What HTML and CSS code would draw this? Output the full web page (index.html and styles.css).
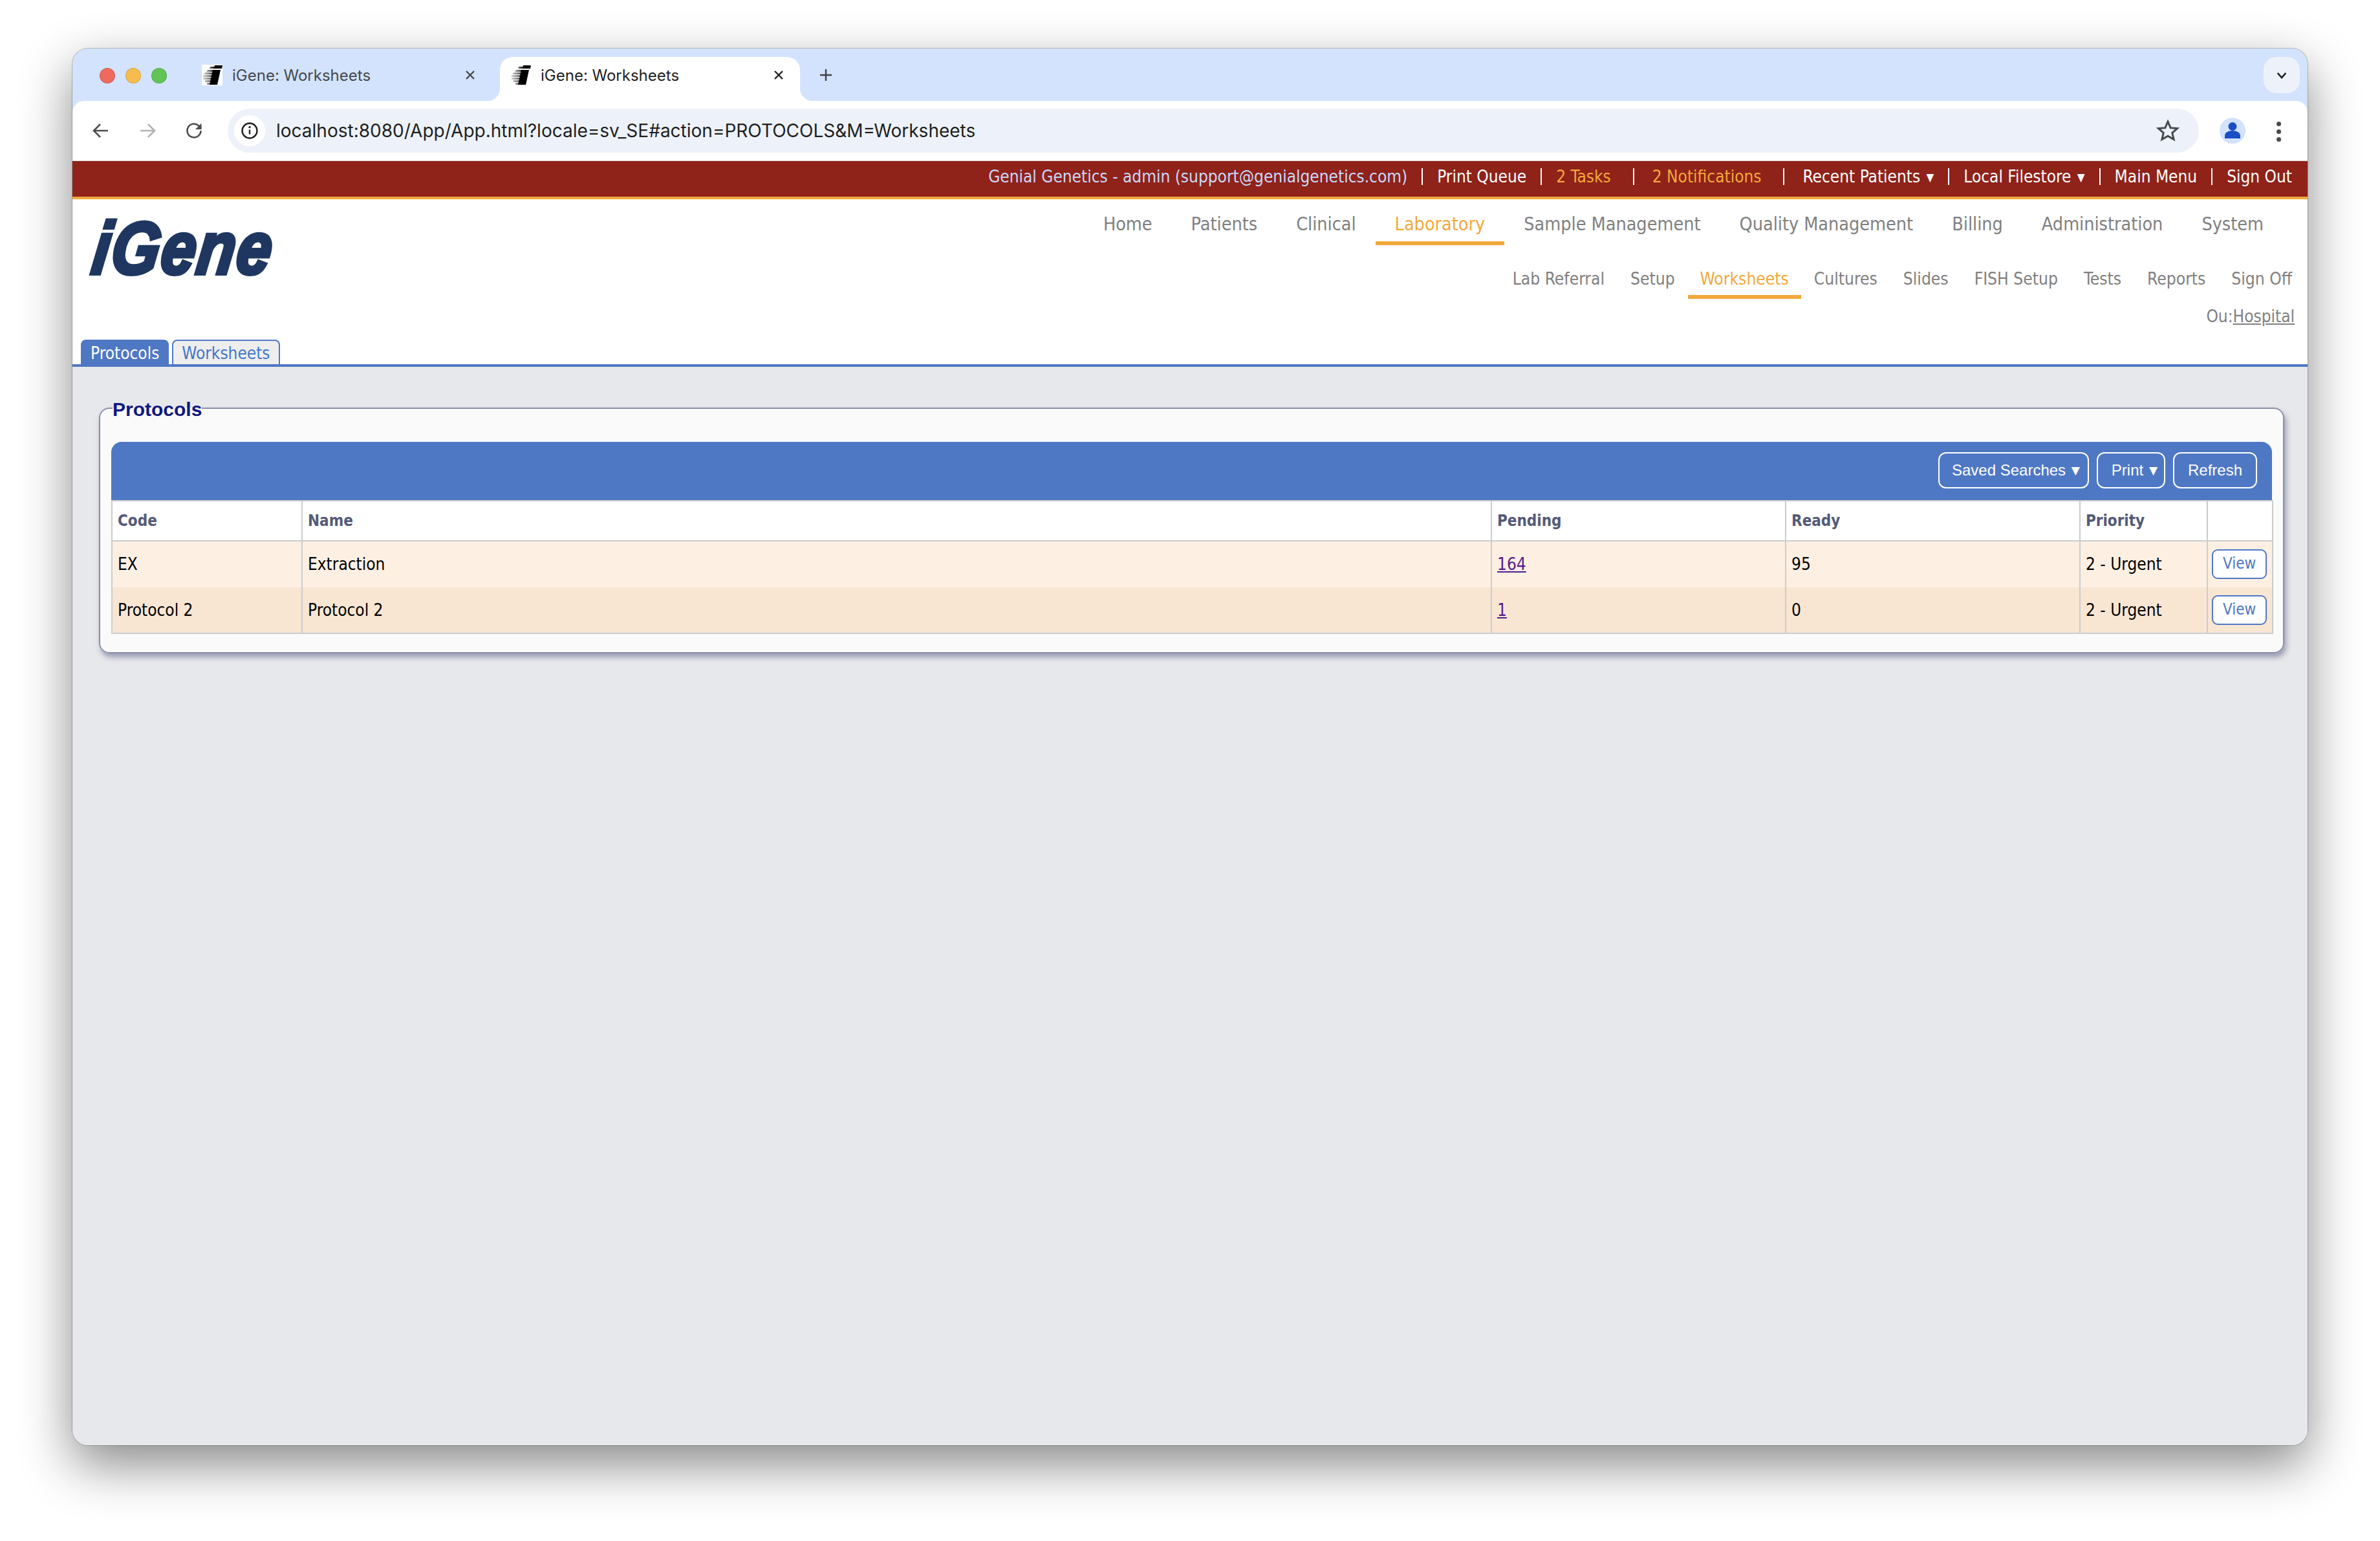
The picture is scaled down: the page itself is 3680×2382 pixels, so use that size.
FILE: index.html
```html
<!DOCTYPE html>
<html lang="en">
<head>
<meta charset="utf-8">
<title>iGene: Worksheets</title>
<link rel="stylesheet" href="styles.css">
</head>
<body>
<svg class="defs" width="0" height="0" aria-hidden="true">
  <defs>
    <linearGradient id="fade" x1="0" x2="1" y1="0" y2="0">
      <stop offset="0" stop-color="#000" stop-opacity=".12"/>
      <stop offset=".6" stop-color="#000" stop-opacity=".55"/>
      <stop offset="1" stop-color="#000"/>
    </linearGradient>
    <symbol id="favicon" viewBox="0 0 32 32">
      <rect width="32" height="32" fill="#fff"/>
      <path d="M20 1h12l-1 5H19zM17 8h12l-5 23H12z" fill="#000"/>
      <path d="M13 3h8l-1 3H12zM9 8h10l-1 3H7zM5 12h14l-1 3H3zM2 16h16l-1 3H1zM2 20h14l-1 3H2zM5 24h10l-1 3H5zM8 28h6l-1 3H8z" fill="url(#fade)"/>
    </symbol>
  </defs>
</svg>
<div class="window">
  <div class="tabstrip">
    <div class="lights">
      <span class="light light-red"></span>
      <span class="light light-amber"></span>
      <span class="light light-green"></span>
    </div>
    <div class="btab">
      <svg class="favicon"><use href="#favicon"/></svg>
      <span class="btab-title">iGene: Worksheets</span>
      <svg class="btab-x" viewBox="0 0 18 18"><path d="M3 3l12 12M15 3L3 15"/></svg>
    </div>
    <div class="btab btab-active">
      <svg class="favicon"><use href="#favicon"/></svg>
      <span class="btab-title">iGene: Worksheets</span>
      <svg class="btab-x" viewBox="0 0 18 18"><path d="M3 3l12 12M15 3L3 15"/></svg>
    </div>
    <svg class="newtab" viewBox="0 0 24 24"><path d="M12 3v18M3 12h18"/></svg>
    <div class="tabsearch"><svg viewBox="0 0 20 12"><path d="M3 2l7 8 7-8"/></svg></div>
  </div>
  <div class="toolbar">
    <div class="tool"><svg viewBox="0 0 28 28" class="ico"><path d="M25 14H4M13 4L3 14l10 10"/></svg></div>
    <div class="tool"><svg viewBox="0 0 28 28" class="ico ico-off"><path d="M3 14h21M15 4l10 10-10 10"/></svg></div>
    <div class="tool"><svg viewBox="0 0 28 28" class="ico"><path d="M24.5 14a10.5 10.5 0 1 1-3.2-7.6L25 10"/><path class="solid" d="M25.5 2.5v9.5h-9.5z"/></svg></div>
    <div class="omnibox">
      <span class="site-info"><svg viewBox="0 0 28 28"><circle cx="14" cy="14" r="11.5"/><path d="M14 12.5v7"/><circle class="solid" cx="14" cy="8.6" r="1.7"/></svg></span>
      <span class="url">localhost:8080/App/App.html?locale=sv_SE#action=PROTOCOLS&amp;M=Worksheets</span>
      <svg class="star" viewBox="0 0 32 32"><path d="M16 3.5l3.7 8.6 9.3.8-7 6.1 2.1 9.1-8.1-4.8-8.1 4.8 2.1-9.1-7-6.1 9.3-.8z"/></svg>
    </div>
    <div class="avatar"><svg viewBox="0 0 40 40"><circle cx="20" cy="13.5" r="6.5"/><path d="M8 32v-4c0-5 5-8 12-8s12 3 12 8v4z"/></svg></div>
    <div class="kebab"><i></i><i></i><i></i></div>
  </div>
  <div class="app">
    <div class="topbar">
      <span class="tb-user">Genial Genetics - admin (support@genialgenetics.com)</span>
      <span class="tb-sep"></span>
      <span>Print Queue</span>
      <span class="tb-sep"></span>
      <span class="tb-alert">2 Tasks</span>
      <span class="tb-sep tb-sep-wide"></span>
      <span class="tb-alert">2 Notifications</span>
      <span class="tb-sep tb-sep-wide"></span>
      <span>Recent Patients <span class="caret">▼</span></span>
      <span class="tb-sep"></span>
      <span>Local Filestore <span class="caret">▼</span></span>
      <span class="tb-sep"></span>
      <span>Main Menu</span>
      <span class="tb-sep"></span>
      <span>Sign Out</span>
    </div>
    <div class="header">
      <div class="header-top">
        <div class="logo">iGene</div>
        <div class="navs">
          <nav class="mainnav">
            <a>Home</a><a>Patients</a><a>Clinical</a><a class="on">Laboratory</a><a>Sample Management</a><a>Quality Management</a><a>Billing</a><a>Administration</a><a>System</a>
          </nav>
          <nav class="subnav">
            <a>Lab Referral</a><a>Setup</a><a class="on">Worksheets</a><a>Cultures</a><a>Slides</a><a>FISH Setup</a><a>Tests</a><a>Reports</a><a>Sign Off</a>
          </nav>
          <div class="ou">Ou:<u>Hospital</u></div>
        </div>
      </div>
      <div class="pagetabs">
        <span class="pagetab pagetab-on">Protocols</span>
        <span class="pagetab">Worksheets</span>
      </div>
    </div>
    <div class="content">
      <fieldset class="panel">
        <legend class="panel-title">Protocols</legend>
        <div class="panel-bar">
          <span class="barbtn barbtn-saved">Saved Searches <span class="caret">▼</span></span>
          <span class="barbtn barbtn-print">Print <span class="caret">▼</span></span>
          <span class="barbtn barbtn-refresh">Refresh</span>
        </div>
        <table class="grid">
          <colgroup>
            <col class="c1"><col class="c2"><col class="c3"><col class="c4"><col class="c5"><col class="c6">
          </colgroup>
          <thead>
            <tr><th>Code</th><th>Name</th><th>Pending</th><th>Ready</th><th>Priority</th><th></th></tr>
          </thead>
          <tbody>
            <tr class="odd"><td>EX</td><td>Extraction</td><td><a class="count">164</a></td><td>95</td><td>2 - Urgent</td><td class="act"><span class="viewbtn">View</span></td></tr>
            <tr class="even"><td>Protocol 2</td><td>Protocol 2</td><td><a class="count">1</a></td><td>0</td><td>2 - Urgent</td><td class="act"><span class="viewbtn">View</span></td></tr>
          </tbody>
        </table>
      </fieldset>
    </div>
  </div>
</div>
</body>
</html>
```
FILE: styles.css
```css
* { box-sizing: border-box; }
html, body { margin: 0; height: 100%; }
body {
  background: #fff;
  padding: 75px 112px 148px;
  overflow: hidden;
  font-family: "DejaVu Sans Condensed", "DejaVu Sans", sans-serif;
  font-stretch: condensed;
}
.defs { position: absolute; }
.window {
  height: 2159px;
  display: flex;
  flex-direction: column;
  background: #d3e3fd;
  border-radius: 24px;
  overflow: hidden;
  box-shadow: 0 0 0 1px rgba(0,0,0,.22);
}
body::before {
  content: "";
  position: absolute;
  left: 112px; top: 75px;
  width: 3456px; height: 2159px;
  border-radius: 24px;
  box-shadow: 0 30px 80px rgba(0,0,0,.47);
}
.window { position: relative; }

/* browser chrome */
.tabstrip {
  height: 81px;
  flex: none;
  display: flex;
  align-items: flex-start;
  padding: 13px 12px 0 42px;
}
.lights { display: flex; gap: 16px; margin-top: 17px; margin-right: 38px; }
.light { width: 24px; height: 24px; border-radius: 50%; border: 1px solid rgba(0,0,0,.12); }
.light-red { background: #ee6a5f; }
.light-amber { background: #f5bd4f; }
.light-green { background: #61c454; }
.btab {
  width: 464px;
  height: 68px;
  display: flex;
  align-items: center;
  padding: 0 24px 12px 16px;
  margin-right: 13px;
  position: relative;
  border-radius: 20px 20px 0 0;
}
.btab-active { background: #fff; margin-right: 0; }
.btab-active::before, .btab-active::after {
  content: "";
  position: absolute;
  bottom: 0;
  width: 20px;
  height: 20px;
}
.btab-active::before { left: -20px; background: radial-gradient(circle at 0 0, transparent 20px, #fff 20.5px); }
.btab-active::after { right: -20px; background: radial-gradient(circle at 100% 0, transparent 20px, #fff 20.5px); }
.favicon { width: 32px; height: 32px; flex: none; }
.btab-active .favicon { border-radius: 2px; }
.btab-title {
  flex: 1;
  margin-left: 15px;
  font-family: Inter, sans-serif;
  font-stretch: normal;
  font-size: 24px;
  color: #45484d;
  white-space: nowrap;
}
.btab-active .btab-title { color: #1f1f1f; }
.btab-x { width: 18px; height: 18px; fill: none; stroke: #45484d; stroke-width: 2.4; flex: none; margin-top: 0; }
.btab-active .btab-x { stroke: #1f1f1f; }
.newtab { width: 24px; height: 24px; margin: 16px 0 0 28px; fill: none; stroke: #3d4043; stroke-width: 2.4; flex: none; }
.tabsearch {
  margin-left: auto;
  width: 56px;
  height: 56px;
  background: #edf2fa;
  border-radius: 20px;
  display: flex;
  align-items: center;
  justify-content: center;
}
.tabsearch svg { width: 18px; height: 11px; fill: none; stroke: #1f1f1f; stroke-width: 2.8; }
.toolbar {
  height: 93px;
  flex: none;
  background: #fff;
  border-radius: 18px 18px 0 0;
  border-bottom: 1px solid #dcdcdc;
  display: flex;
  align-items: flex-start;
  padding: 12px 40px 0 8px;
}
.tool { width: 72px; height: 68px; display: flex; align-items: center; justify-content: center; }
.ico { width: 28px; height: 28px; fill: none; stroke: #4a4d50; stroke-width: 2.6; }
.ico-off { stroke: #b0b2b4; }
.ico .solid { fill: #4a4d50; stroke: none; }
.omnibox {
  flex: 1;
  height: 68px;
  margin-left: 16px;
  background: #edf2fa;
  border-radius: 34px;
  display: flex;
  align-items: center;
  padding: 0 30px 0 10px;
}
.site-info {
  width: 48px;
  height: 48px;
  border-radius: 50%;
  background: #fff;
  display: flex;
  align-items: center;
  justify-content: center;
  flex: none;
}
.site-info svg { width: 28px; height: 28px; fill: none; stroke: #1f1f1f; stroke-width: 2.4; }
.site-info .solid { fill: #1f1f1f; stroke: none; }
.url {
  margin-left: 17px;
  font-family: Inter, sans-serif;
  font-stretch: normal;
  font-size: 28px;
  color: #1f1f1f;
  white-space: nowrap;
}
.star { width: 36px; height: 36px; margin-left: auto; fill: none; stroke: #45484d; stroke-width: 2.6; }
.avatar {
  width: 40px;
  height: 40px;
  margin: 14px 0 0 32px;
  border-radius: 50%;
  background: #d3e3fd;
  flex: none;
}
.avatar svg { width: 40px; height: 40px; fill: #1a4fc4; display: block; }
.kebab {
  width: 8px;
  margin: 20px 0 0 48px;
  display: flex;
  flex-direction: column;
  gap: 5px;
  flex: none;
}
.kebab i { width: 7px; height: 7px; border-radius: 50%; background: #45484d; }

/* app */
.app { flex: 1; display: flex; flex-direction: column; background: #e7e8ec; min-height: 0; }
.topbar {
  height: 59px;
  flex: none;
  background: #8f2219;
  border-bottom: 4px solid #f2a93b;
  display: flex;
  justify-content: flex-end;
  align-items: center;
  padding: 0 24px 8px 0;
  font-size: 26px;
  color: #fff;
  white-space: nowrap;
}
.tb-user { color: #c9d9f8; }
.tb-alert { color: #f2a93b; }
.tb-sep { width: 2px; height: 26px; background: #fff; margin: 0 22px; flex: none; }
.tb-sep-wide { margin: 0 28px 0 34px; }
.caret { font-size: 17px; vertical-align: 2px; margin-left: 2px; }
.header { height: 255px; flex: none; background: #fff; display: flex; flex-direction: column; }
.header-top { height: 217px; display: flex; justify-content: space-between; }
.logo {
  margin: 0 0 0 32px;
  width: 300px;
  height: 160px;
  font-family: "Liberation Sans", sans-serif;
  font-stretch: normal;
  font-weight: 700;
  font-style: italic;
  font-size: 114px;
  line-height: 152px;
  color: #1f3760;
  -webkit-text-stroke: 6px #1f3760;
  letter-spacing: 3px;
  transform: scaleX(.84) skewX(-9deg);
  transform-origin: 0 50%;
}
.navs { display: flex; flex-direction: column; align-items: flex-end; }
.mainnav { display: flex; margin-right: 38px; height: 71px; }
.mainnav a {
  padding: 0 30px;
  height: 71px;
  line-height: 78px;
  font-size: 28.5px;
  color: #808080;
  white-space: nowrap;
}
.mainnav a.on, .subnav a.on { color: #f2a93b; border-bottom: 6px solid #f2a93b; }
.subnav { display: flex; margin-right: 4px; margin-top: 18px; height: 65px; }
.subnav a {
  padding: 0 20px;
  height: 65px;
  line-height: 69px;
  font-size: 26.2px;
  color: #808080;
  white-space: nowrap;
}
.subnav a.on { padding: 0 19px; }
.ou { margin-right: 20px; margin-top: 10px; font-size: 26px; color: #808080; line-height: 34px; }
.pagetabs { display: flex; gap: 5px; height: 38px; padding-left: 13px; }
.pagetab {
  height: 38px;
  padding: 0 13px;
  border: 2px solid #4f78c4;
  border-bottom: 0;
  border-radius: 8px 8px 0 0;
  background: #eeeeee;
  color: #4476c9;
  font-size: 26px;
  line-height: 39px;
  white-space: nowrap;
}
.pagetab-on { background: #4f78c4; color: #fff; }
.content {
  flex: 1;
  border-top: 4px solid #4f78c4;
  padding: 45px 36px 0 41px;
  min-height: 0;
}
.panel {
  margin: 0;
  min-width: 0;
  border: 2px solid #8a8fa8;
  border-radius: 16px;
  background: #fafafa;
  padding: 33px 17px 28px;
  box-shadow: 3px 6px 8px rgba(90,95,130,.55);
}
.panel-title {
  margin-left: 2px;
  padding: 4px 0 0;
  font-family: "Liberation Sans", sans-serif;
  font-stretch: normal;
  font-weight: 700;
  font-size: 30px;
  line-height: 34px;
  color: #10187f;
}
.panel-bar {
  height: 90px;
  margin-top: 0;
  background: #4f78c4;
  border-radius: 16px 16px 0 0;
  display: flex;
  justify-content: flex-end;
  align-items: flex-start;
  gap: 12px;
  padding: 16px 23px 0 0;
}
.barbtn {
  height: 56px;
  border: 2px solid #fff;
  border-radius: 12px;
  color: #fff;
  font-family: "Liberation Sans", sans-serif;
  font-stretch: normal;
  font-size: 24px;
  line-height: 52px;
  white-space: nowrap;
}
.barbtn-saved { padding: 0 12px 0 19px; }
.barbtn-print { padding: 0 10px 0 21px; }
.barbtn-refresh { padding: 0 21px 0 21px; }
.barbtn .caret { font-family: "DejaVu Sans", sans-serif; }
.grid {
  width: 3341px;
  table-layout: fixed;
  border-collapse: collapse;
  border: 2px solid #cccccc;
  font-size: 26px;
  color: #000;
}
.c1 { width: 294px; }
.c2 { width: 1839px; }
.c3, .c4 { width: 455px; }
.c5 { width: 197px; }
.c6 { width: 101px; }
.grid th, .grid td {
  padding: 0 0 0 8px;
  text-align: left;
  border-left: 2px solid #cccccc;
  border-right: 2px solid #cccccc;
  white-space: nowrap;
}
.grid th {
  height: 62px;
  background: #fff;
  color: #555a78;
  font-weight: 700;
  font-size: 24px;
  border-bottom: 2px solid #cccccc;
}
.grid td { height: 71.5px; }
.odd td { background: #fdf0e3; }
.even td { background: #f8e6d3; }
.count { color: #551a8b; text-decoration: underline; }
.grid .act { padding: 0 0 0 6px; }
.viewbtn {
  display: block;
  width: 85px;
  height: 46px;
  border: 2px solid #4f78c4;
  border-radius: 9px;
  background: #fff;
  color: #4f78c4;
  font-size: 24px;
  line-height: 40px;
  text-align: center;
}
```
